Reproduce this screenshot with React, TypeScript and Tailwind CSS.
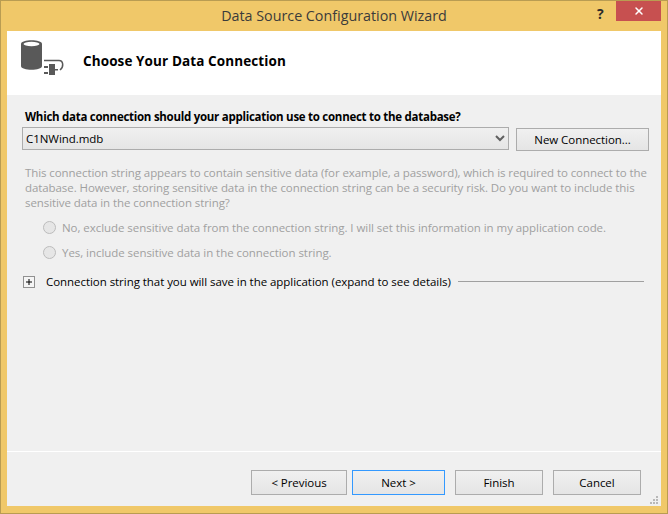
import { X } from "lucide-react";

const FONT = "font-['Open_Sans','Noto_Sans',sans-serif]";
const BODY_TEXT = "text-[11.5px] tracking-[-0.05px]";

function WizardButton({ label, width, height = "h-[25px]", focused = false }: { label: string; width: string; height?: string; focused?: boolean }) {
    return (
        <button
            className={`${width} ${height} border ${BODY_TEXT} text-black bg-gradient-to-b from-[#f0f0f0] to-[#e5e5e5] ${focused ? "border-[#3399ff]" : "border-[#acacac]"}`}
        >
            {label}
        </button>
    );
}

function Radio({ label }: { label: string }) {
    return (
        <div className="flex items-center gap-[6px] h-[25px]">
            <span className="w-[13px] h-[13px] rounded-full border border-[#bcbcbc] bg-[#e6e6e6]" />
            <span>{label}</span>
        </div>
    );
}

function DbIcon() {
    return (
        <svg width="44" height="37" viewBox="0 0 44 37" className="block">
            <path d="M1 4 C1 -1 22 -1 22 4 V26 C22 31 1 31 1 26 Z" fill="#595959" />
            <ellipse cx="11.5" cy="4" rx="8" ry="2.2" fill="#fff" />
            <path d="M24 20.5 H39 C43.5 20.5 44 27 40 30" fill="none" stroke="#595959" strokeWidth="1.5" />
            <path d="M29 24 h6 v11 h-6 z M24 26 h4 v2 h-4 z M24 32 h4 v2 h-4 z M35 29 h3 v1.5 h-3 z" fill="#595959" />
        </svg>
    );
}

export default function App() {
    return (
        <div className={`${FONT} w-[668px] h-[514px] border border-[#b99c52] bg-[#f0c869] flex flex-col overflow-hidden`}>
            {/* Title bar */}
            <div className="relative h-[30px] shrink-0 flex items-center justify-center text-[14.3px] text-[#3b3b3b]">
                Data Source Configuration Wizard
                <span className="absolute left-[596px] top-[2px] text-[14px] font-bold text-[#2b2b2b]">?</span>
                <span className="absolute left-[615px] top-0 w-[45px] h-[20px] bg-[#c75050] flex items-center justify-center">
                    <X size={12} strokeWidth={3} color="#fff" />
                </span>
            </div>

            <div className="mx-[6px] h-[475px] flex flex-col bg-[#f0f0f0] relative">
                {/* Header */}
                <div className="h-[64px] shrink-0 bg-white flex items-start pl-[13px] pt-[9px] gap-[19px]">
                    <DbIcon />
                    <span className="mt-[11px] text-[13.5px] tracking-[0.1px] font-bold text-black">Choose Your Data Connection</span>
                </div>

                {/* Body */}
                <div className={`flex-1 pt-[14px] ${BODY_TEXT}`}>
                    <div className="pl-[18px] h-[18px] font-bold text-black leading-[16px] tracking-[-0.27px]">
                        Which data connection should your application use to connect to the database?
                    </div>
                    <div className="flex items-start pl-[15px] gap-[7px]">
                        <div className="w-[487px] h-[23px] border border-[#acacac] bg-gradient-to-b from-[#f0f0f0] to-[#e5e5e5] flex items-center justify-between px-[3px] text-black">
                            <span>C1NWind.mdb</span>
                            <svg width="10" height="7" viewBox="0 0 10 7">
                                <path d="M1 1 L5 5 L9 1" fill="none" stroke="#606060" strokeWidth="2" />
                            </svg>
                        </div>
                        <div className="pt-px">
                            <WizardButton label="New Connection..." width="w-[133px]" height="h-[23px]" />
                        </div>
                    </div>

                    <p className="mt-[14px] ml-[18px] leading-[15px] tracking-[-0.08px] text-[#a0a0a0] whitespace-nowrap">
                        This connection string appears to contain sensitive data (for example, a password), which is required to connect to the<br />
                        database. However, storing sensitive data in the connection string can be a security risk. Do you want to include this<br />
                        sensitive data in the connection string?
                    </p>

                    <div className="mt-[5px] ml-[36px] text-[#a0a0a0]">
                        <Radio label="No, exclude sensitive data from the connection string. I will set this information in my application code." />
                        <Radio label="Yes, include sensitive data in the connection string." />
                    </div>

                    <div className="mt-[8px] ml-[16px] w-[621px] flex items-center text-black">
                        <span className="w-[12px] h-[12px] border border-[#919191] bg-[#f5f5f5] flex items-center justify-center shrink-0">
                            <svg width="6" height="6" viewBox="0 0 6 6">
                                <path d="M0 3 H6 M3 0 V6" stroke="#000" strokeWidth="1" />
                            </svg>
                        </span>
                        <span className="ml-[11px] whitespace-nowrap">Connection string that you will save in the application (expand to see details)</span>
                        <span className="ml-[7px] flex-1 h-px bg-[#a0a0a0]" />
                    </div>
                </div>

                {/* Footer */}
                <div className="h-[55px] shrink-0 border-t border-white flex justify-end items-start pt-[18px] pr-[20px]">
                    <WizardButton label="< Previous" width="w-[96px]" />
                    <span className="w-[5px]" />
                    <WizardButton label="Next >" width="w-[93px]" focused />
                    <span className="w-[10px]" />
                    <WizardButton label="Finish" width="w-[88px]" />
                    <span className="w-[10px]" />
                    <WizardButton label="Cancel" width="w-[88px]" />
                </div>

                {/* Resize grip */}
                <svg width="9" height="9" viewBox="0 0 9 9" className="absolute right-[2px] bottom-[1px]">
                    <path d="M6 0h2v2h-2z M3 3h2v2h-2z M6 3h2v2h-2z M0 6h2v2h-2z M3 6h2v2h-2z M6 6h2v2h-2z" fill="#b8b8b8" />
                </svg>
            </div>
        </div>
    );
}
